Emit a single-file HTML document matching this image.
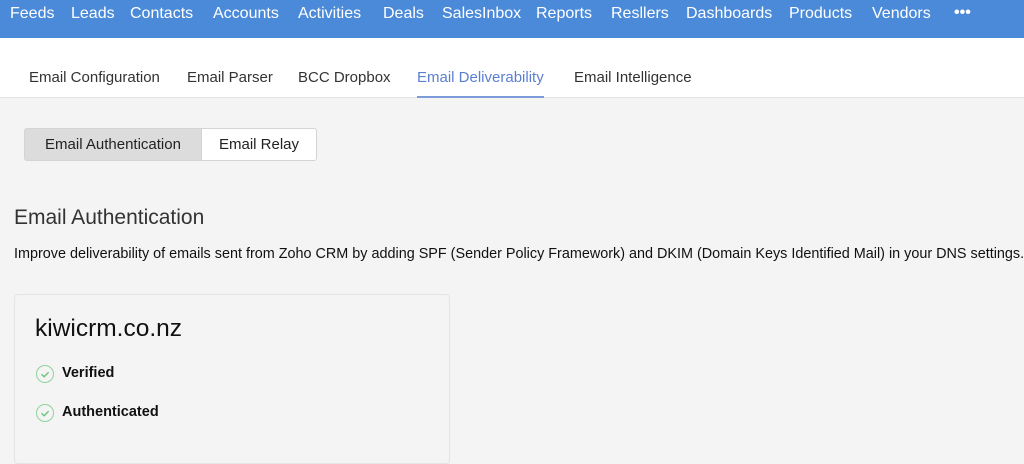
<!DOCTYPE html>
<html><head><style>
*{margin:0;padding:0;box-sizing:border-box}
body{width:1024px;height:447px;overflow:hidden;background:#f4f4f4;font-family:"Liberation Sans",sans-serif;position:relative;color:#222}
.a{position:absolute;white-space:nowrap}
#nav{position:absolute;left:0;top:0;width:1024px;height:38px;background:#4a8ad9}
#nav span{position:absolute;top:4px;font-size:16px;color:#fff;line-height:20px}
#tabs{position:absolute;left:0;top:38px;width:1024px;height:60px;background:#fff;border-bottom:1px solid #e2e2e2}
#tabs span{position:absolute;top:31px;font-size:15px;color:#333;line-height:18px}
.btn{position:absolute;top:128px;height:33px;border:1px solid #d4d4d4;font-size:15px;line-height:31px;text-align:center;color:#222}
.chk{position:absolute;width:18px;height:18px;border:1.5px solid #8fd39a;border-radius:50%}
</style></head><body>
<div id="nav">
<span style="left:10px">Feeds</span><span style="left:71px">Leads</span><span style="left:130px">Contacts</span><span style="left:213px">Accounts</span><span style="left:298px">Activities</span><span style="left:383px">Deals</span><span style="left:442px">SalesInbox</span><span style="left:536px">Reports</span><span style="left:611px">Resllers</span><span style="left:686px">Dashboards</span><span style="left:789px">Products</span><span style="left:872px">Vendors</span><span style="left:954px;top:3px;font-weight:bold">•••</span>
</div>
<div id="tabs">
<span style="left:29px">Email Configuration</span><span style="left:187px">Email Parser</span><span style="left:298px">BCC Dropbox</span><span style="left:417px;color:#5b7fd0">Email Deliverability</span><span style="left:574px">Email Intelligence</span>
<div style="position:absolute;left:417px;top:58px;width:127px;height:2px;background:#7d9bd8"></div>
</div>
<div class="btn" style="left:24px;width:178px;background:#dcdcdc;border-radius:3px 0 0 3px">Email Authentication</div>
<div class="btn" style="left:201px;width:116px;background:#fff;border-radius:0 3px 3px 0">Email Relay</div>
<div class="a" style="left:14px;top:206px;font-size:21px;color:#333">Email Authentication</div>
<div class="a" style="left:14px;top:246px;font-size:14.4px;color:#111">Improve deliverability of emails sent from Zoho CRM by adding SPF (Sender Policy Framework) and DKIM (Domain Keys Identified Mail) in your DNS settings.</div>
<div style="position:absolute;left:14px;top:294px;width:436px;height:170px;border:1px solid #e4e4e4;border-radius:4px;background:#f4f4f4"></div>
<div class="a" style="left:35px;top:315px;font-size:24.5px;color:#111">kiwicrm.co.nz</div>
<div class="chk" style="left:36px;top:365px"></div>
<svg class="a" style="left:36px;top:365px" width="18" height="18"><path d="M5.5 9.2l2.6 2.6 4.5-4.6" fill="none" stroke="#6cc47a" stroke-width="1.4"/></svg>
<div class="a" style="left:62px;top:365px;font-size:14.5px;font-weight:bold;color:#111">Verified</div>
<div class="chk" style="left:36px;top:404px"></div>
<svg class="a" style="left:36px;top:404px" width="18" height="18"><path d="M5.5 9.2l2.6 2.6 4.5-4.6" fill="none" stroke="#6cc47a" stroke-width="1.4"/></svg>
<div class="a" style="left:62px;top:404px;font-size:14.5px;font-weight:bold;color:#111">Authenticated</div>
</body></html>
